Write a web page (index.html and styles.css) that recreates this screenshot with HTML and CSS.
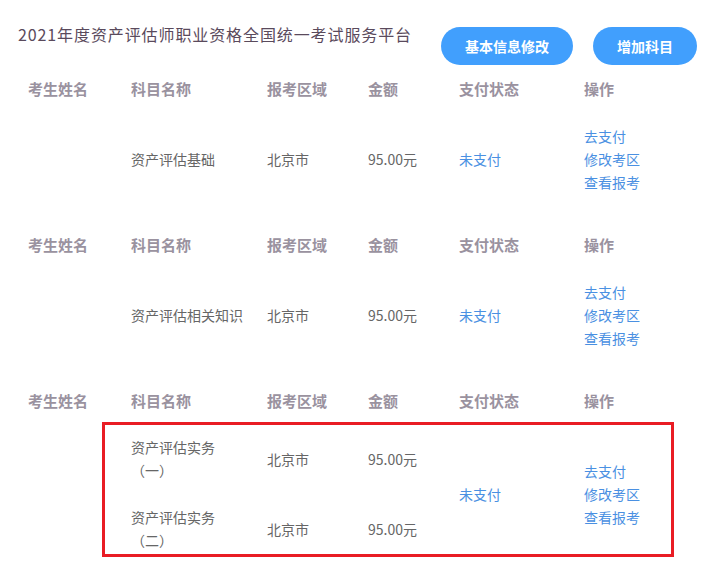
FILE: index.html
```html
<!DOCTYPE html>
<html lang="zh-CN">
<head>
<meta charset="utf-8">
<title>2021年度资产评估师职业资格全国统一考试服务平台</title>
<link rel="stylesheet" href="styles.css">
</head>
<body>
<div class="page">
  <div class="topbar">
    <h1 class="title">2021年度资产评估师职业资格全国统一考试服务平台</h1>
    <div class="actions">
      <button class="btn">基本信息修改</button>
      <button class="btn">增加科目</button>
    </div>
  </div>

  <section class="block">
    <div class="row head">
      <div class="c first">考生姓名</div>
      <div class="c">科目名称</div>
      <div class="c">报考区域</div>
      <div class="c">金额</div>
      <div class="c">支付状态</div>
      <div class="c">操作</div>
    </div>
    <div class="row data">
      <div class="c first"></div>
      <div class="c">资产评估基础</div>
      <div class="c">北京市</div>
      <div class="c">95.00元</div>
      <div class="c link">未支付</div>
      <div class="c ops"><a>去支付</a><a>修改考区</a><a>查看报考</a></div>
    </div>
  </section>

  <section class="block">
    <div class="row head">
      <div class="c first">考生姓名</div>
      <div class="c">科目名称</div>
      <div class="c">报考区域</div>
      <div class="c">金额</div>
      <div class="c">支付状态</div>
      <div class="c">操作</div>
    </div>
    <div class="row data">
      <div class="c first"></div>
      <div class="c">资产评估相关知识</div>
      <div class="c">北京市</div>
      <div class="c">95.00元</div>
      <div class="c link">未支付</div>
      <div class="c ops"><a>去支付</a><a>修改考区</a><a>查看报考</a></div>
    </div>
  </section>

  <section class="block">
    <div class="row head">
      <div class="c first">考生姓名</div>
      <div class="c">科目名称</div>
      <div class="c">报考区域</div>
      <div class="c">金额</div>
      <div class="c">支付状态</div>
      <div class="c">操作</div>
    </div>
    <div class="box">
      <div class="bc name r1">资产评估实务<br>（一）</div>
      <div class="bc r1">北京市</div>
      <div class="bc r1">95.00元</div>
      <div class="bc link span">未支付</div>
      <div class="bc ops span"><a>去支付</a><a>修改考区</a><a>查看报考</a></div>
      <div class="bc name r2">资产评估实务<br>（二）</div>
      <div class="bc r2">北京市</div>
      <div class="bc r2">95.00元</div>
    </div>
  </section>
</div>
</body>
</html>
```

FILE: styles.css
```css
* { box-sizing: border-box; }
body {
  margin: 0;
  background: #fff;
  font-family: "Noto Sans CJK SC", "Noto Sans", sans-serif;
  color: #666;
  font-size: 14px;
}
.page { width: 711px; }

.topbar {
  display: flex;
  align-items: flex-start;
  justify-content: space-between;
  padding: 23px 14px 0 18px;
  height: 68px;
}
.title {
  margin: 0;
  font-size: 16px;
  font-weight: normal;
  line-height: 22px;
  letter-spacing: 0.9px;
  color: #5a4a5c;
}
.actions {
  display: flex;
  gap: 20px;
  margin-top: 4px;
}
.btn {
  height: 38px;
  padding: 0 24px;
  border: none;
  border-radius: 19px;
  background: #419ffd;
  color: #fff;
  font-family: inherit;
  font-size: 14px;
  font-weight: bold;
  line-height: 38px;
}

.block { margin-bottom: 14px; }

.row {
  display: grid;
  grid-template-columns: 131px 136px 101px 91px 125px 1fr;
  align-items: center;
}
.row .first { padding-left: 28px; }
.head { height: 40px; }
.head .c {
  font-size: 15px;
  font-weight: bold;
  color: #9a929f;
}
.data { height: 102px; }
.c, .bc { line-height: 23px; white-space: nowrap; }

.link { color: #4a90e2; }
.ops { display: flex; flex-direction: column; }
.ops a { color: #4a90e2; cursor: pointer; }

.box {
  margin: 2px 0 0 102px;
  width: 572px;
  height: 135px;
  border: 3px solid #e91c24;
  padding: 11px 0 0 26px;
  display: grid;
  grid-template-columns: 136px 101px 91px 125px 1fr;
  grid-template-rows: 46px 46px;
  row-gap: 24px;
  align-items: center;
}
.box .r1 { grid-row: 1; }
.box .r2 { grid-row: 2; }
.box .span { grid-row: 1 / 3; }
```
